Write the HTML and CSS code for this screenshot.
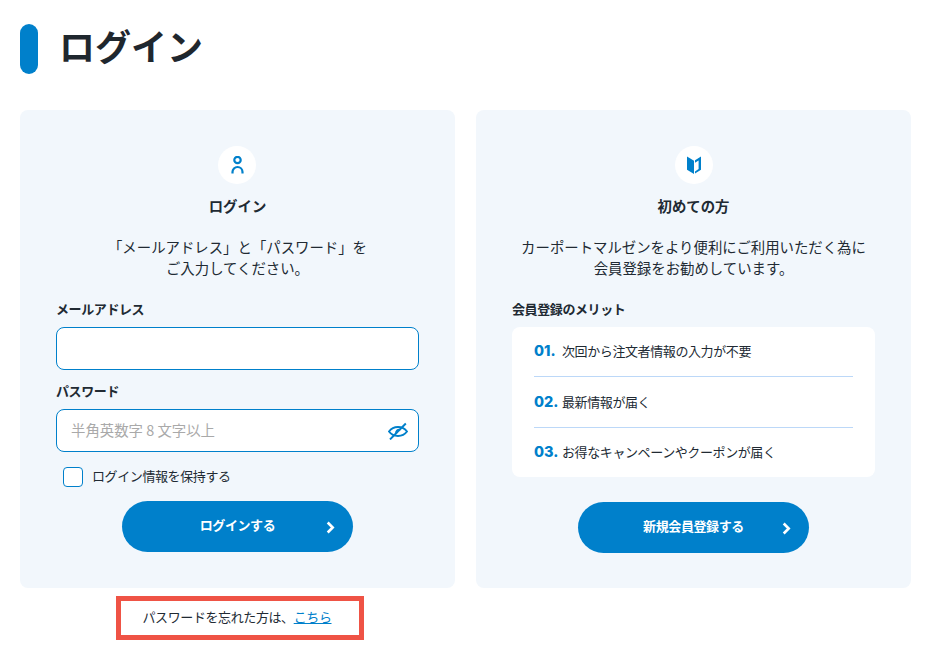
FILE: index.html
```html
<!DOCTYPE html>
<html lang="ja">
<head>
<meta charset="utf-8">
<title>ログイン</title>
<link rel="stylesheet" href="styles.css">
</head>
<body>
<main class="page">
  <h1 class="title">ログイン</h1>
  <div class="columns">
    <div class="column">
      <section class="card">
        <div class="icon-circle">
          <svg class="icon" width="13" height="18" viewBox="0 0 13 18" fill="none" stroke="#0080cb" stroke-width="2.200"><circle cx="6.500" cy="4" r="3.200"/><path d="M1.500 17.500v-1.500a5 5 0 0 1 10 0v1.500"/></svg>
        </div>
        <h2 class="card-title">ログイン</h2>
        <p class="lead">「メールアドレス」と「パスワード」を<br>ご入力してください。</p>
        <label class="label" for="mail">メールアドレス</label>
        <input class="field" id="mail" type="text">
        <label class="label label-next" for="pass">パスワード</label>
        <div class="field-wrap">
          <input class="field field-pass" id="pass" type="text" placeholder="半角英数字 8 文字以上">
          <svg class="eye" width="20" height="18" viewBox="0 0 20 18" fill="none" stroke="#0080cb" stroke-width="1.900"><path d="M1 9.500C3.200 6.500 6.300 5 10 5s6.800 1.500 9 4.500c-2.200 3-5.300 4.500-9 4.500S3.200 12.500 1 9.500z"/><path d="M12.400 8a3 3 0 0 0-4.200 3.600"/><path d="M2 17.500 17.800 1.500"/></svg>
        </div>
        <label class="check-row"><span class="check"></span><span class="check-text">ログイン情報を保持する</span></label>
        <a class="button button-login" href="#"><span>ログインする</span><svg class="chev" width="9" height="13" viewBox="0 0 9 13" fill="none" stroke="#fff" stroke-width="2.600"><path d="M1.700 1.500 6.700 6.500l-5 5"/></svg></a>
      </section>
      <div class="forgot-wrap">
        <p class="forgot">パスワードを忘れた方は、<a href="#">こちら</a></p>
      </div>
    </div>
    <section class="card">
      <div class="icon-circle">
        <svg class="icon" width="14" height="18" viewBox="0 0 14 18"><path fill="#0080cb" d="M0 .5 7 4.800V18L0 13.800z"/><path fill="#0080cb" fill-rule="evenodd" d="M14 .5V13.800L8 17.600V15.400L11.600 13V4.600L8 6.800V4.300z"/></svg>
      </div>
      <h2 class="card-title">初めての方</h2>
      <p class="lead">カーポートマルゼンをより便利にご利用いただく為に<br>会員登録をお勧めしています。</p>
      <p class="label">会員登録のメリット</p>
      <ul class="merits">
        <li class="merit"><span class="num">01.</span><span class="merit-text">次回から注文者情報の入力が不要</span></li>
        <li class="merit"><span class="num">02.</span><span class="merit-text">最新情報が届く</span></li>
        <li class="merit"><span class="num">03.</span><span class="merit-text">お得なキャンペーンやクーポンが届く</span></li>
      </ul>
      <a class="button button-register" href="#"><span>新規会員登録する</span><svg class="chev" width="9" height="13" viewBox="0 0 9 13" fill="none" stroke="#fff" stroke-width="2.600"><path d="M1.700 1.500 6.700 6.500l-5 5"/></svg></a>
    </section>
  </div>
</main>
</body>
</html>
```
FILE: styles.css
```css
* { box-sizing: border-box; }
html, body { margin: 0; padding: 0; height: 100%; overflow: hidden; background: #fff; }
body {
  font-family: "Noto Sans CJK JP", "Noto Sans", sans-serif;
  color: #212a33;
  font-size: 14px;
}
.page { padding: 24px 28px 0 20px; }
.title {
  margin: 0;
  height: 50px;
  line-height: 42px;
  font-size: 36px;
  font-weight: 700;
  color: #1f272e;
  display: flex;
  align-items: flex-start;
  gap: 21px;
}
.title::before {
  content: "";
  width: 18px;
  height: 50px;
  border-radius: 9px;
  background: #0080cb;
}
.columns {
  margin-top: 36px;
  display: grid;
  grid-template-columns: 435px 435px;
  gap: 21px;
}
.card {
  height: 478px;
  background: #f2f7fc;
  border-radius: 8px;
  padding: 36px 36px 0;
  display: flex;
  flex-direction: column;
}
.icon-circle {
  width: 38px;
  height: 38px;
  border-radius: 50%;
  background: #fff;
  align-self: center;
  display: flex;
  align-items: center;
  justify-content: center;
}
.column .icon-circle { margin-left: -1px; }
.card-title {
  margin: 11px 0 0;
  font-size: 14.400px;
  line-height: 21px;
  font-weight: 700;
  text-align: center;
}
.lead {
  margin: 20px 0 0;
  line-height: 21px;
  text-align: center;
  font-size: 14.400px;
}
.label {
  display: block;
  margin: 20px 0 0;
  font-size: 13px;
  letter-spacing: -0.400px;
  line-height: 21px;
  font-weight: 700;
}
.label-next { margin-top: 10px; }
.field {
  display: block;
  width: 100%;
  height: 43px;
  margin-top: 8px;
  border: 1px solid #0080cb;
  border-radius: 8px;
  background: #fff;
  font: inherit;
  font-size: 14.400px;
  outline: none;
  padding: 0 14px 2px;
}
.field::placeholder { color: #a9a9a9; opacity: 1; }
.field-wrap { position: relative; }
.eye { position: absolute; right: 11px; top: 21px; }
.check-row {
  display: flex;
  align-items: center;
  gap: 9px;
  margin: 15px 0 0 7px;
  height: 20px;
  font-size: 13px;
  letter-spacing: -0.400px;
}
.check-text { padding-bottom: 3px; }
.check {
  width: 20px;
  height: 20px;
  border: 1px solid #0080cb;
  border-radius: 4px;
  background: #fff;
}
.button {
  position: relative;
  display: flex;
  align-items: center;
  justify-content: center;
  align-self: center;
  width: 231px;
  height: 51px;
  border-radius: 26px;
  background: #0080cb;
  color: #fff;
  font-size: 13px;
  letter-spacing: -0.400px;
  font-weight: 700;
  text-decoration: none;
  padding-bottom: 5px;
}
.button-login { margin-top: 14px; }
.button-register { margin-top: 25px; }
.chev { position: absolute; right: 18px; top: 20px; }
.merits {
  list-style: none;
  margin: 8px 0 0;
  padding: 0 22px;
  height: 150px;
  background: #fff;
  border-radius: 8px;
}
.merit {
  display: flex;
  align-items: center;
  height: 51px;
  font-size: 13px;
  letter-spacing: -0.400px;
  border-bottom: 1px solid #bcd8f8;
}
.merit:first-child { height: 50px; }
.merit:last-child { height: 49px; border-bottom: 0; }
.merit-text { padding-bottom: 2px; }
.num {
  width: 28px;
  font-family: "Inter", sans-serif;
  font-weight: 800;
  font-size: 14.500px;
  letter-spacing: 0;
  color: #0080cb;
  padding-bottom: 2px;
}
.forgot-wrap { margin: 8px 0 0 96px; }
.forgot {
  margin: 0;
  width: 248px;
  height: 44px;
  border: 5px solid #ef5345;
  display: flex;
  align-items: center;
  justify-content: center;
  font-size: 13px;
  letter-spacing: -0.400px;
  padding: 0 6px 4px 0;
}
.forgot a { color: #0080cb; text-decoration: underline; }
```
